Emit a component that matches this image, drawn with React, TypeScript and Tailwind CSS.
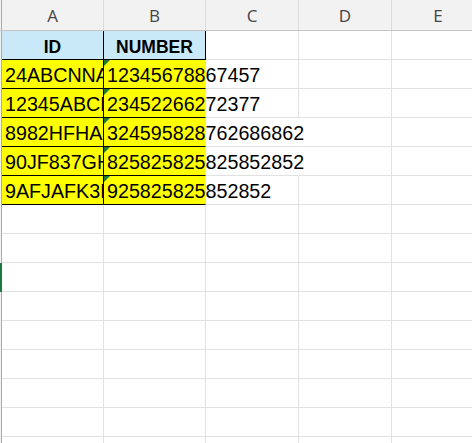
const cols = [
  { key: "A", w: "w-[102px]" },
  { key: "B", w: "w-[102px]" },
  { key: "C", w: "w-[93px]" },
  { key: "D", w: "w-[93px]" },
  { key: "E", w: "w-[93px]" },
]

const data = [
  ["24ABCNNA", "12345678867457"],
  ["12345ABCBD", "23452266272377"],
  ["8982HFHAGS", "324595828762686862"],
  ["90JF837GHS", "825825825825852852"],
  ["9AFJAFK3KA", "925825825852852"],
]

// rows whose text in B runs past the C/D gridline
const longRows = [2, 3]

const cellText = "font-['Liberation_Sans',Arial,sans-serif] text-[19.7px] leading-[22px] text-black"

function Triangle() {
  return (
    <svg className="absolute left-0 top-0" width="6" height="6" viewBox="0 0 6 6">
      <polygon points="0,0 6,0 0,6" fill="#1d7a38" />
    </svg>
  )
}

function RowHead({ selected }: { selected?: boolean }) {
  return (
    <div
      className={`w-[2px] shrink-0 ${selected ? "bg-[#1d7a45]" : "border-r border-[#ababab] bg-[#f2f2f2]"}`}
    />
  )
}

function EmptyCell({ w, hideRight }: { w: string; hideRight?: boolean }) {
  return (
    <div
      className={`${w} shrink-0 border-b border-r border-b-[#e1e1e1] ${hideRight ? "border-r-transparent" : "border-r-[#e1e1e1]"}`}
    />
  )
}

export default function App() {
  const blankRows = Array.from({ length: 10 })

  return (
    <div className="h-[443px] w-[472px] overflow-hidden bg-white">
      {/* column letters */}
      <div className="flex h-[31px] border-b border-[#c4c4c4] bg-[#f2f2f2]">
        <div className="w-[2px] shrink-0 border-r border-[#ababab]" />
        {cols.map((c) => (
          <div
            key={c.key}
            className={`${c.w} flex shrink-0 items-center justify-center border-r border-[#dcdcdc] pt-[2px] font-['Open_Sans',sans-serif] text-[17px] text-[#454545]`}
          >
            {c.key}
          </div>
        ))}
      </div>

      {/* header row */}
      <div className="flex h-[29px]">
        <RowHead />
        <div className="flex w-[102px] shrink-0 items-end justify-center border-b border-r border-black bg-[#c9e9f8] pb-[1px] font-['Liberation_Sans',Arial,sans-serif] text-[17.5px] font-bold leading-[22px]">
          ID
        </div>
        <div className="flex w-[102px] shrink-0 items-end justify-center border-b border-r border-black bg-[#c9e9f8] pb-[1px] font-['Liberation_Sans',Arial,sans-serif] text-[17.5px] font-bold leading-[22px]">
          NUMBER
        </div>
        <EmptyCell w="w-[93px]" />
        <EmptyCell w="w-[93px]" />
        <EmptyCell w="w-[93px]" />
      </div>

      {data.map(([id, num], i) => (
        <div key={id} className="flex h-[29px]">
          <RowHead />
          <div
            className={`flex w-[102px] shrink-0 items-end overflow-hidden whitespace-nowrap border-b border-r border-black bg-[#ffff00] pb-[2px] pl-[3px] ${cellText}`}
          >
            {id}
          </div>
          <div
            className={`relative z-10 flex w-[102px] shrink-0 items-end whitespace-nowrap border-b border-r border-b-black border-r-transparent bg-[#ffff00] pb-[2px] pl-[3px] ${cellText}`}
          >
            <Triangle />
            {num}
          </div>
          <EmptyCell w="w-[93px]" hideRight={longRows.includes(i)} />
          <EmptyCell w="w-[93px]" />
          <EmptyCell w="w-[93px]" />
        </div>
      ))}

      {blankRows.map((_, i) => (
        <div key={i} className="flex h-[29px]">
          <RowHead selected={i === 2} />
          {cols.map((c) => (
            <EmptyCell key={c.key} w={c.w} />
          ))}
        </div>
      ))}
    </div>
  )
}
